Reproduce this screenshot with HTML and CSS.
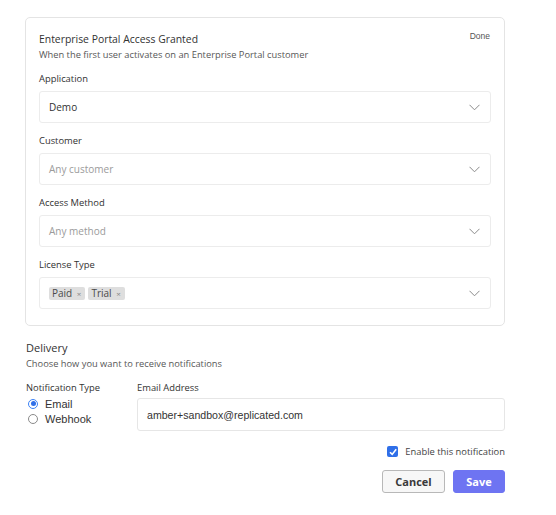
FILE: index.html
```html
<!DOCTYPE html>
<html>
<head>
<meta charset="utf-8">
<link rel="stylesheet" href="styles.css">
</head>
<body>
<div class="page">
  <div class="card">
    <div class="card-head">
      <div>
        <div class="title">Enterprise Portal Access Granted</div>
        <div class="subtitle">When the first user activates on an Enterprise Portal customer</div>
      </div>
      <div class="done">Done</div>
    </div>
    <div class="field">
      <div class="label">Application</div>
      <div class="select">
        <span class="value">Demo</span>
        <svg class="chev" width="11" height="7" viewBox="0 0 11 7"><path d="M0.5 0.8 L5.5 5.8 L10.5 0.8" fill="none" stroke="#8a8a8a" stroke-width="1"/></svg>
      </div>
    </div>
    <div class="field">
      <div class="label">Customer</div>
      <div class="select">
        <span class="placeholder">Any customer</span>
        <svg class="chev" width="11" height="7" viewBox="0 0 11 7"><path d="M0.5 0.8 L5.5 5.8 L10.5 0.8" fill="none" stroke="#8a8a8a" stroke-width="1"/></svg>
      </div>
    </div>
    <div class="field">
      <div class="label">Access Method</div>
      <div class="select">
        <span class="placeholder">Any method</span>
        <svg class="chev" width="11" height="7" viewBox="0 0 11 7"><path d="M0.5 0.8 L5.5 5.8 L10.5 0.8" fill="none" stroke="#8a8a8a" stroke-width="1"/></svg>
      </div>
    </div>
    <div class="field">
      <div class="label">License Type</div>
      <div class="select">
        <span class="tags">
          <span class="tag">Paid <span class="x">×</span></span>
          <span class="tag">Trial <span class="x">×</span></span>
        </span>
        <svg class="chev" width="11" height="7" viewBox="0 0 11 7"><path d="M0.5 0.8 L5.5 5.8 L10.5 0.8" fill="none" stroke="#8a8a8a" stroke-width="1"/></svg>
      </div>
    </div>
  </div>

  <div class="delivery">
    <div class="title">Delivery</div>
    <div class="subtitle">Choose how you want to receive notifications</div>
    <div class="delivery-row">
      <div class="ntype">
        <div class="label">Notification Type</div>
        <div class="radio-row"><span class="radio on"></span><span class="rlabel">Email</span></div>
        <div class="radio-row"><span class="radio"></span><span class="rlabel">Webhook</span></div>
      </div>
      <div class="email">
        <div class="label">Email Address</div>
        <div class="input">amber+sandbox@replicated.com</div>
      </div>
    </div>
    <div class="enable-row">
      <span class="checkbox">
        <svg width="10" height="10" viewBox="0 0 10 10"><path d="M2 5.2 L4.2 7.4 L8.2 2.2" fill="none" stroke="#fff" stroke-width="1.6"/></svg>
      </span>
      <span class="enable-label">Enable this notification</span>
    </div>
    <div class="buttons">
      <button class="btn cancel">Cancel</button>
      <button class="btn save">Save</button>
    </div>
  </div>
</div>
</body>
</html>
```

FILE: styles.css
```css
html, body {
  margin: 0;
  padding: 0;
  background: #fff;
}
body {
  font-family: "Open Sans", "Noto Sans", sans-serif;
  color: #323232;
}
.page {
  width: 480px;
  padding: 17px 0 0 25px;
}
.card {
  border: 1px solid #e4e4e4;
  border-radius: 5px;
  padding: 13px 13px 16px 13px;
}
.card-head {
  display: flex;
  justify-content: space-between;
  align-items: flex-start;
}
.title {
  font-size: 10.4px;
  line-height: 16px;
  color: #323232;
}
.subtitle {
  font-size: 9.3px;
  line-height: 16px;
  color: #575757;
}
.done {
  font-family: "Liberation Sans", Arial, sans-serif;
  font-size: 8.5px;
  color: #555;
  margin-top: 0px;
  margin-right: 1px;
}
.field {
  margin-top: 8px;
}
.field + .field {
  margin-top: 10px;
}
.label {
  font-size: 9.4px;
  line-height: 16px;
  color: #323232;
  margin-bottom: 4px;
}
.select {
  height: 30px;
  border: 1px solid #ececec;
  border-radius: 3px;
  display: flex;
  align-items: center;
  justify-content: space-between;
  padding: 0 10px 0 9px;
}
.value {
  font-size: 10px;
  color: #323232;
}
.placeholder {
  font-size: 10px;
  color: #9b9b9b;
}
.chev {
  display: block;
}
.tags {
  display: flex;
  gap: 3px;
}
.tag {
  background: #dedede;
  border-radius: 2px;
  font-size: 10px;
  line-height: 13px;
  padding: 0 4px 0 3px;
  color: #4a4a4a;
}
.tag .x {
  font-size: 8px;
  color: #888;
  margin-left: 2px;
}
.delivery {
  margin-top: 14px;
  padding-left: 1px;
}
.delivery .title {
  font-size: 11px;
  font-weight: 500;
}
.delivery-row {
  display: flex;
  margin-top: 8px;
}
.delivery-row .label {
  margin-bottom: 0;
}
.ntype {
  width: 111px;
}
.email {
  flex: 1;
}
.radio-row {
  display: flex;
  align-items: center;
  height: 15px;
  padding-left: 2px;
}
.radio {
  width: 8px;
  height: 8px;
  border-radius: 50%;
  border: 1px solid #8a8a8a;
  box-sizing: content-box;
  position: relative;
}
.radio.on {
  border-color: #3b82f6;
  background: #fff;
}
.radio.on::after {
  content: "";
  position: absolute;
  left: 1.5px;
  top: 1.5px;
  width: 5px;
  height: 5px;
  border-radius: 50%;
  background: #2f6fe8;
}
.rlabel {
  font-family: "Liberation Sans", Arial, sans-serif;
  font-size: 11px;
  color: #333;
  margin-left: 7px;
}
.input {
  height: 31px;
  border: 1px solid #e6e6e6;
  border-radius: 3px;
  display: flex;
  align-items: center;
  padding-left: 9px;
  font-family: "Liberation Sans", Arial, sans-serif;
  font-size: 10.6px;
  color: #333;
  margin-top: 2px;
}
.enable-row {
  display: flex;
  justify-content: flex-end;
  align-items: center;
  margin-top: 14px;
}
.checkbox {
  width: 11px;
  height: 11px;
  background: #2f6fe8;
  border-radius: 2px;
  display: flex;
  align-items: center;
  justify-content: center;
}
.enable-label {
  font-size: 9.4px;
  color: #444;
  margin-left: 7px;
}
.buttons {
  display: flex;
  justify-content: flex-end;
  gap: 8px;
  margin-top: 12px;
}
.btn {
  height: 23px;
  border-radius: 3px;
  font-family: "Open Sans", sans-serif;
  font-weight: 700;
  font-size: 11px;
  padding: 0;
}
.cancel {
  width: 63px;
  background: #f7f7f7;
  border: 1px solid #b8b8b8;
  color: #3a3a3a;
}
.save {
  width: 52px;
  background: #6e74f2;
  border: 1px solid #6e74f2;
  color: #fff;
}
```
